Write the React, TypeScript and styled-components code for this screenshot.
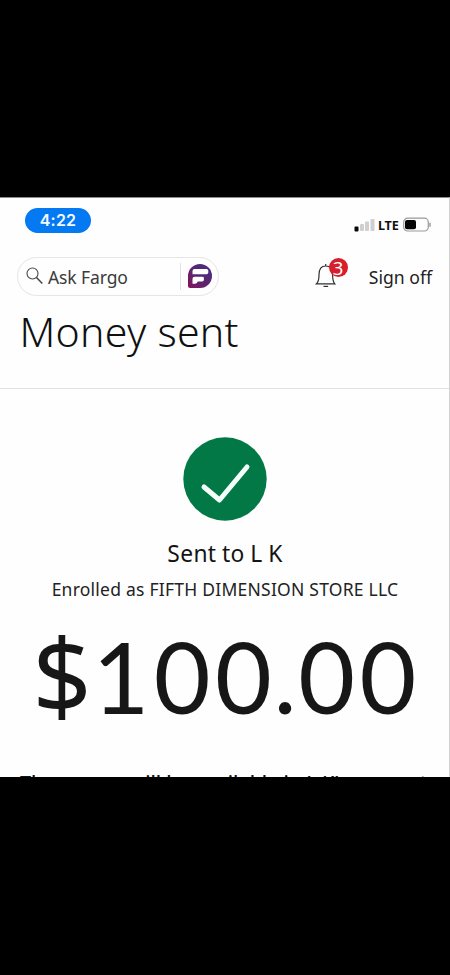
import React from "react";
import styled, { createGlobalStyle } from "styled-components";

const GlobalStyle = createGlobalStyle`
  * { box-sizing: border-box; }
  body { margin: 0; background: #000; }
`;

const Page = styled.div`
  height: 975px;
  padding: 197px 0 198px;
  background: #000;
  overflow: hidden;
  font-family: "Noto Sans", sans-serif;
  color: #141414;
`;

const Screen = styled.main`
  height: 580px;
  background: #fefefe;
  border-top: 1px solid #8c8c8c;
  border-right: 1px solid #d2d2d2;
  overflow: hidden;
`;

const StatusBar = styled.div`
  height: 58px;
  padding: 10px 18px 0 25px;
  display: flex;
  justify-content: space-between;
  align-items: flex-start;
`;

const Clock = styled.div`
  width: 66px;
  height: 25px;
  border-radius: 13px;
  background: #0479f2;
  color: #f4faff;
  font: 600 16px/25px Inter, sans-serif;
  letter-spacing: 0.25px;
  text-align: center;
`;

const Signals = styled.div`
  display: flex;
  align-items: center;
  margin-top: 9px;
  height: 16px;
`;

const Carrier = styled.span`
  width: 25px;
  padding-top: 1px;
  color: #111;
  font: 700 12.6px/16px "Noto Sans", sans-serif;
  letter-spacing: -0.2px;
`;

const Toolbar = styled.div`
  height: 40px;
  padding: 0 17px 0 17px;
  display: flex;
  align-items: center;
`;

const Search = styled.div`
  width: 202px;
  height: 39px;
  padding: 0 5px 0 8px;
  display: flex;
  align-items: center;
  border: 1.5px solid #e6e4e6;
  border-radius: 20px;
`;

const Placeholder = styled.span`
  flex: 1;
  padding: 2px 0 0 4px;
  color: #3b3b3b;
  font-size: 17.5px;
  line-height: 26px;
  letter-spacing: -0.1px;
  white-space: nowrap;
`;

const Divider = styled.i`
  width: 1px;
  height: 27px;
  margin-right: 6px;
  background: #e2e2e2;
`;

const Alerts = styled.div`
  position: relative;
  width: 34px;
  height: 40px;
  margin-left: 95px;
`;

const Badge = styled.span`
  position: absolute;
  left: 14.5px;
  top: 2px;
  width: 19px;
  height: 19px;
  border-radius: 50%;
  background: #d71e2b;
  color: #fff;
  font-size: 18.5px;
  line-height: 19px;
  text-align: center;
`;

const BellIcon = styled.svg`
  position: absolute;
  left: 1px;
  top: 5px;
`;

const SignOff = styled.span`
  margin-left: auto;
  padding-top: 2px;
  color: #222;
  font-size: 17.6px;
  line-height: 26px;
  white-space: nowrap;
`;

const TitleBar = styled.header`
  height: 93px;
  padding-left: 19.5px;
  border-bottom: 1.5px solid #e2e2e2;
`;

const Title = styled.h1`
  margin: 0;
  color: #101010;
  font-size: 41px;
  font-weight: 300;
  line-height: 71px;
  letter-spacing: 0.3px;
  white-space: nowrap;
`;

const Receipt = styled.section`
  display: flex;
  flex-direction: column;
  align-items: center;
  padding-top: 46px;
`;

const Recipient = styled.p`
  margin: 16px 0 0;
  padding-left: 1px;
  font-size: 22.8px;
  line-height: 34px;
  letter-spacing: 0.35px;
  word-spacing: -0.7px;
  white-space: nowrap;
`;

const Enrolled = styled.p`
  margin: 5px 0 0;
  padding-left: 1px;
  color: #222;
  font-size: 17.5px;
  line-height: 26px;
  letter-spacing: 0.24px;
  white-space: nowrap;
`;

const Amount = styled.p`
  height: 112px;
  margin: 18px 0 0;
  padding-left: 4px;
  color: #171717;
  font: 400 98px/112px Lato, sans-serif;
  letter-spacing: 4.4px;
  white-space: nowrap;
`;

const Currency = styled.span`
  font-family: "Noto Sans", sans-serif;
  font-size: 104px;
  line-height: 0;
  letter-spacing: 0.8px;
`;

const Tight = styled.span`
  letter-spacing: 1.6px;
`;

const Notice = styled.p`
  align-self: flex-start;
  margin: 37px 0 0 20px;
  color: #111;
  font-size: 19.7px;
  font-weight: 500;
  line-height: 28px;
  white-space: nowrap;
`;

export default function App() {
  return (
    <Page>
      <GlobalStyle />
      <Screen>
        <StatusBar>
          <Clock>4:22</Clock>
          <Signals>
            <svg width="24" height="16" viewBox="0 0 24 16">
              <rect x="0.5" y="9.5" width="4" height="5" rx="1" fill="#080808" />
              <rect x="6" y="7" width="4" height="7" rx="1" fill="#cfcfcf" />
              <rect x="11" y="4.5" width="4" height="9.5" rx="1" fill="#cfcfcf" />
              <rect x="16.5" y="2" width="4" height="12" rx="1" fill="#cfcfcf" />
            </svg>
            <Carrier>LTE</Carrier>
            <svg width="28" height="16" viewBox="0 0 28 16">
              <rect x="0.7" y="1.2" width="24.6" height="12.8" rx="4" fill="none" stroke="#999" strokeWidth="1.2" />
              <rect x="2" y="3" width="11" height="9.2" rx="2" fill="#050505" />
              <path d="M27 5.7v4" stroke="#999" strokeWidth="1.4" />
            </svg>
          </Signals>
        </StatusBar>
        <Toolbar>
          <Search>
            <svg width="18" height="20" viewBox="0 0 18 20" fill="none" stroke="#484848">
              <circle cx="6.5" cy="7.5" r="5.5" strokeWidth="1.1" />
              <path d="M10.5 11.5l5.8 6" strokeWidth="1.6" />
            </svg>
            <Placeholder>Ask Fargo</Placeholder>
            <Divider />
            <svg width="26" height="26" viewBox="0 0 26 26">
              <defs>
                <linearGradient id="fargo" x1="0" y1="1" x2="1" y2="0">
                  <stop offset="0" stopColor="#85135f" />
                  <stop offset="0.5" stopColor="#59256f" />
                  <stop offset="1" stopColor="#47308a" />
                </linearGradient>
              </defs>
              <path d="M13 1a12 12 0 0 1 0 24H3q-2 0-2-2V13A12 12 0 0 1 13 1z" fill="url(#fargo)" />
              <path
                d="M7.5 6H19.5q1.8 0 1.8 1.8v1.7q0 1.8-1.8 1.8H5.5V8q0-2 2-2z M7.5 13.8h8q1.4 0 1.4 1.4v1.6q0 1.8-1.8 1.8h-4.3q-1 2.2-2.8 2.2H5.5v-5q0-2 2-2z"
                fill="#fff"
              />
            </svg>
          </Search>
          <Alerts>
            <BellIcon width="24" height="28" viewBox="0 0 24 28" fill="none" stroke="#303030" strokeWidth="1.2">
              <path d="M1.5 22.8h18.3c-2.2-2.4-2.2-5.5-2.2-9C17.6 8 15.2 5 10.7 5S4 8 4 13.8c0 3.5 0 6.6-2.5 9z M10.7 3v2" />
              <path d="M8.5 25.4h4.6" />
            </BellIcon>
            <Badge>3</Badge>
          </Alerts>
          <SignOff>Sign off</SignOff>
        </Toolbar>
        <TitleBar>
          <Title>Money sent</Title>
        </TitleBar>
        <Receipt>
          <svg width="86" height="86" viewBox="0 0 86 86">
            <circle cx="43" cy="44" r="41.7" fill="#037847" />
            <path d="M22 52l15.5 13L65 32" fill="none" stroke="#f3fff8" strokeWidth="5" strokeLinecap="round" strokeLinejoin="round" />
          </svg>
          <Recipient>Sent to L K</Recipient>
          <Enrolled>Enrolled as FIFTH DIMENSION STORE LLC</Enrolled>
          <Amount>
            <Currency>$</Currency>10<Tight>0.</Tight>00
          </Amount>
          <Notice>The money will be available in L K&rsquo;s account</Notice>
        </Receipt>
      </Screen>
    </Page>
  );
}
